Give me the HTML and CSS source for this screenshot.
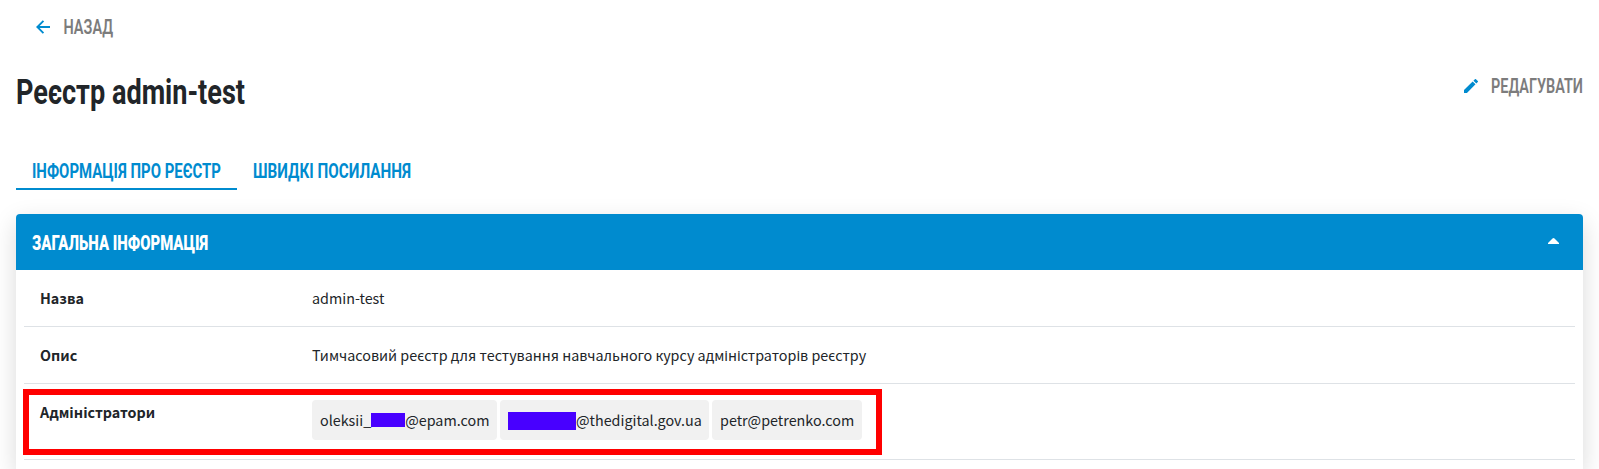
FILE: index.html
```
<!DOCTYPE html>
<html lang="uk">
<head>
<meta charset="utf-8">
<title>Реєстр admin-test</title>
<link rel="stylesheet" href="styles.css">
</head>
<body>
<main class="page">
  <a class="back">
    <svg class="icon" viewBox="0 0 16 16"><path d="M16 8H2M8.5 1 1.5 8 8.5 15"/></svg>
    <svg class="display" width="52" height="24"><text x="0.5" y="19" textLength="49.5" lengthAdjust="spacingAndGlyphs">НАЗАД</text></svg>
  </a>
  <header class="heading">
    <h1 class="title"><svg class="display" width="232" height="44"><text x="0" y="33" textLength="229" lengthAdjust="spacingAndGlyphs">Реєстр admin-test</text></svg></h1>
    <a class="edit">
      <svg class="pencil" viewBox="0 0 18 18"><path d="M0 14.2V18h3.8L14.8 6.9 11.1 3.2zM17.7 4a1 1 0 0 0 0-1.4L15.4.3a1 1 0 0 0-1.4 0l-1.9 1.8 3.8 3.8z"/></svg>
      <svg class="display" width="92" height="24"><text x="0" y="19" textLength="92" lengthAdjust="spacingAndGlyphs">РЕДАГУВАТИ</text></svg>
    </a>
  </header>
  <nav class="tabs">
    <a class="tab active"><svg class="display" width="189" height="24"><text x="0" y="19" textLength="189" lengthAdjust="spacingAndGlyphs">ІНФОРМАЦІЯ ПРО РЕЄСТР</text></svg></a>
    <a class="tab"><svg class="display" width="158" height="24"><text x="0" y="19" textLength="158" lengthAdjust="spacingAndGlyphs">ШВИДКІ ПОСИЛАННЯ</text></svg></a>
  </nav>
  <section class="card">
    <div class="card-head">
      <svg class="display" width="178" height="24"><text x="0" y="19" textLength="176" lengthAdjust="spacingAndGlyphs">ЗАГАЛЬНА ІНФОРМАЦІЯ</text></svg>
      <svg class="caret" viewBox="0 0 11 6"><path d="M0 6V5L4.5.5Q5.5-.4 6.5.5L11 5V6z"/></svg>
    </div>
    <div class="rows">
      <div class="row"><b class="label">Назва</b><span class="value">admin-test</span></div>
      <div class="row"><b class="label">Опис</b><span class="value">Тимчасовий реєстр для тестування навчального курсу адміністраторів реєстру</span></div>
      <div class="row admins"><b class="label">Адміністратори</b>
        <div class="chips">
          <span class="chip chip-a">oleksii_<i class="mask"></i>@epam.com</span>
          <span class="chip chip-b"><i class="mask wide"></i>@thedigital.gov.ua</span>
          <span class="chip chip-c">petr@petrenko.com</span>
        </div>
        <div class="highlight"></div>
      </div>
    </div>
  </section>
</main>
</body>
</html>
```
FILE: styles.css
```
* { box-sizing: border-box; }
body {
  margin: 0;
  height: 469px;
  overflow: hidden;
  background: #fff;
  color: #212529;
  font: 14.33px/24px "Noto Sans CJK SC", "Noto Sans", sans-serif;
}
svg { display: block; flex: none; }
.page { padding: 15px 16px 0; }
.display { font: 700 20px Roboto, sans-serif; fill: #008bcf; overflow: visible; }
.back { display: flex; padding-left: 20px; height: 24px; }
.icon { width: 14px; height: 14px; margin: 5px 13px 0 0; fill: none; stroke: #008bcf; stroke-width: 2.1; }
.back .display, .edit .display { fill: #7c7c7c; font-weight: 600; }
.heading { display: flex; justify-content: space-between; margin-top: 33px; height: 44px; }
.title { margin: -1px 0 0 0; }
.title .display { font-size: 35.5px; font-weight: 700; fill: #212529; }
.edit { display: flex; margin-top: 2px; }
.pencil { width: 14px; height: 14px; margin: 5px 13px 0 0; fill: #008bcf; }
.tabs { display: flex; margin-top: 43px; }
.tab { padding: 0 16px; height: 31px; border-bottom: 2px solid transparent; }
.tab.active { border-color: #008bcf; }
.card { margin-top: 24px; height: 255px; border-radius: 4px 4px 0 0; background: #fff; box-shadow: 0 8px 24px rgba(0, 0, 0, .15); }
.card-head {
  display: flex;
  justify-content: space-between;
  height: 56px;
  padding: 17px 24px 0 16px;
  background: #008bcf;
  border-radius: 4px 4px 0 0;
}
.card-head .display { fill: #fff; font-weight: 900; }
.caret { width: 11px; height: 6px; margin-top: 7px; fill: #fff; }
.rows { padding: 0 8px; }
.row {
  display: flex;
  position: relative;
  height: 57px;
  padding: 16px 16px 0;
  border-bottom: 1px solid #dee2e6;
}
.label { flex: none; width: 272px; }
.value { white-space: nowrap; }
.admins { height: 76px; }
.chips { display: flex; gap: 3px; }
.chip {
  display: flex;
  align-items: center;
  height: 40px;
  padding: 0 8px;
  border-radius: 4px;
  background: #f1f1f1;
  white-space: nowrap;
}
.chip-a { width: 185px; }
.chip-b { width: 209px; }
.chip-c { width: 150px; }
.mask { flex: none; width: 34px; height: 14px; background: #4800ff; }
.mask.wide { width: 68px; height: 18px; margin-top: 2px; }
.highlight { position: absolute; left: -1px; top: 5px; width: 859px; height: 66px; border: 6px solid #f00; }
```
